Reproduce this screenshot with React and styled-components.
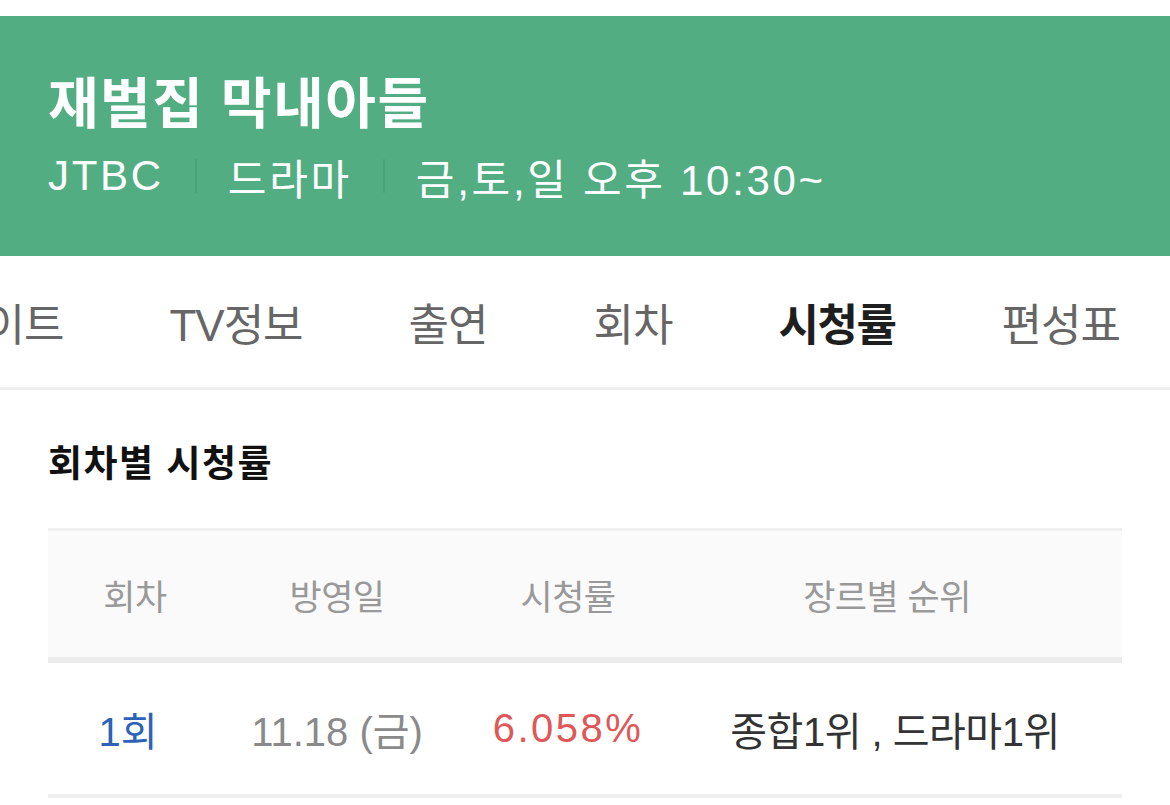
import React from 'react';
import styled, { createGlobalStyle } from 'styled-components';

const GlobalStyle = createGlobalStyle`
    html, body {
        margin: 0;
        padding: 0;
        background: #ffffff;
    }

    body {
        font-family: 'Liberation Sans', 'Noto Sans CJK KR', sans-serif;
        -webkit-font-smoothing: antialiased;
    }
`;

const tabs = ['하이라이트', 'TV정보', '출연', '회차', '시청률', '편성표'];

const ratings = [
    { episode: '1회', date: '11.18 (금)', rate: '6.058%', rank: '종합1위 , 드라마1위' },
];

export default function App() {
    return (
        <>
            <GlobalStyle />
            <Page>
                <Header>
                    <Title>재벌집 막내아들</Title>
                    <MetaRow>
                        <MetaItem>JTBC</MetaItem>
                        <Divider />
                        <MetaItem>드라마</MetaItem>
                        <Divider />
                        <MetaItem>금,토,일 오후 10:30~</MetaItem>
                    </MetaRow>
                </Header>

                <TabBar>
                    <TabTrack>
                        {tabs.map((tab) => (
                            <Tab key={tab}>
                                <TabLabel active={tab === '시청률'}>{tab}</TabLabel>
                            </Tab>
                        ))}
                    </TabTrack>
                </TabBar>

                <Section>
                    <SectionTitle>회차별 시청률</SectionTitle>

                    <Table>
                        <HeadRow>
                            <HeadCell>회차</HeadCell>
                            <HeadCell>방영일</HeadCell>
                            <HeadCell>시청률</HeadCell>
                            <HeadCell>장르별 순위</HeadCell>
                        </HeadRow>

                        {ratings.map((row) => (
                            <BodyRow key={row.episode}>
                                <Cell color='#2c62b8'>{row.episode}</Cell>
                                <Cell color='#8a8a8a'>{row.date}</Cell>
                                <Cell color='#e05757' spacing={2.5}>{row.rate}</Cell>
                                <Cell color='#333333' spacing={-0.5}>{row.rank}</Cell>
                            </BodyRow>
                        ))}
                    </Table>
                </Section>
            </Page>
        </>
    );
}

const Page = styled.div`
    width: 1170px;
    height: 805px;
    overflow: hidden;
    padding-top: 16px;
    box-sizing: border-box;
`;

const Header = styled.div`
    height: 240px;
    box-sizing: border-box;
    background-color: #52ae82;
    padding: 58px 48px 0;
    color: #ffffff;
`;

const Title = styled.h1`
    margin: 0;
    font-size: 55px;
    line-height: 60px;
    font-weight: 700;
    letter-spacing: 1.5px;
`;

const MetaRow = styled.div`
    display: flex;
    align-items: center;
    margin-top: 16px;
    height: 52px;
`;

const MetaItem = styled.span`
    font-size: 42px;
    font-weight: 400;
    letter-spacing: 2.7px;
`;

const Divider = styled.span`
    width: 2px;
    height: 34px;
    margin: 0 31px;
    background-color: #4ba47a;
`;

const TabBar = styled.nav`
    height: 134px;
    border-bottom: 3px solid #efefef;
    box-sizing: border-box;
    overflow: hidden;
`;

const TabTrack = styled.div`
    display: flex;
    height: 100%;
    margin-left: -187px;
`;

const Tab = styled.div`
    flex: none;
    display: flex;
    justify-content: center;
    padding: 0 40px;
    height: 134px;
    margin-bottom: -3px;
`;

const TabLabel = styled.span`
    display: flex;
    align-items: center;
    padding: 0 13px;
    font-size: 44px;
    letter-spacing: ${(props) => (props.active ? -1.5 : -1)}px;
    font-weight: ${(props) => (props.active ? 700 : 400)};
    color: ${(props) => (props.active ? '#1e1e1e' : '#666666')};
    border-bottom: 3px solid ${(props) => (props.active ? '#58a883' : 'transparent')};
`;

const Section = styled.section`
    padding: 0 48px;
`;

const SectionTitle = styled.h2`
    margin: 0;
    padding-top: 50px;
    height: 138px;
    box-sizing: border-box;
    font-size: 37px;
    line-height: 50px;
    font-weight: 700;
    letter-spacing: 1.5px;
    color: #111111;
`;

const Table = styled.div`
    width: 1074px;
`;

const HeadRow = styled.div`
    display: grid;
    grid-template-columns: 174px 230px 232px 406px;
    height: 135px;
    box-sizing: border-box;
    align-items: center;
    background-color: #fafafa;
    border-top: 3px solid #efefef;
    border-bottom: 6px solid #ebebeb;
`;

const HeadCell = styled.div`
    text-align: center;
    font-size: 35px;
    letter-spacing: -0.5px;
    color: #999999;
`;

const BodyRow = styled.div`
    display: grid;
    grid-template-columns: 160px 258px 204px 450px;
    height: 135px;
    box-sizing: border-box;
    align-items: center;
    border-bottom: 4px solid #f0f0f0;
`;

const Cell = styled.div`
    text-align: center;
    font-size: 40px;
    letter-spacing: ${(props) => props.spacing || 0}px;
    color: ${(props) => props.color};
`;
